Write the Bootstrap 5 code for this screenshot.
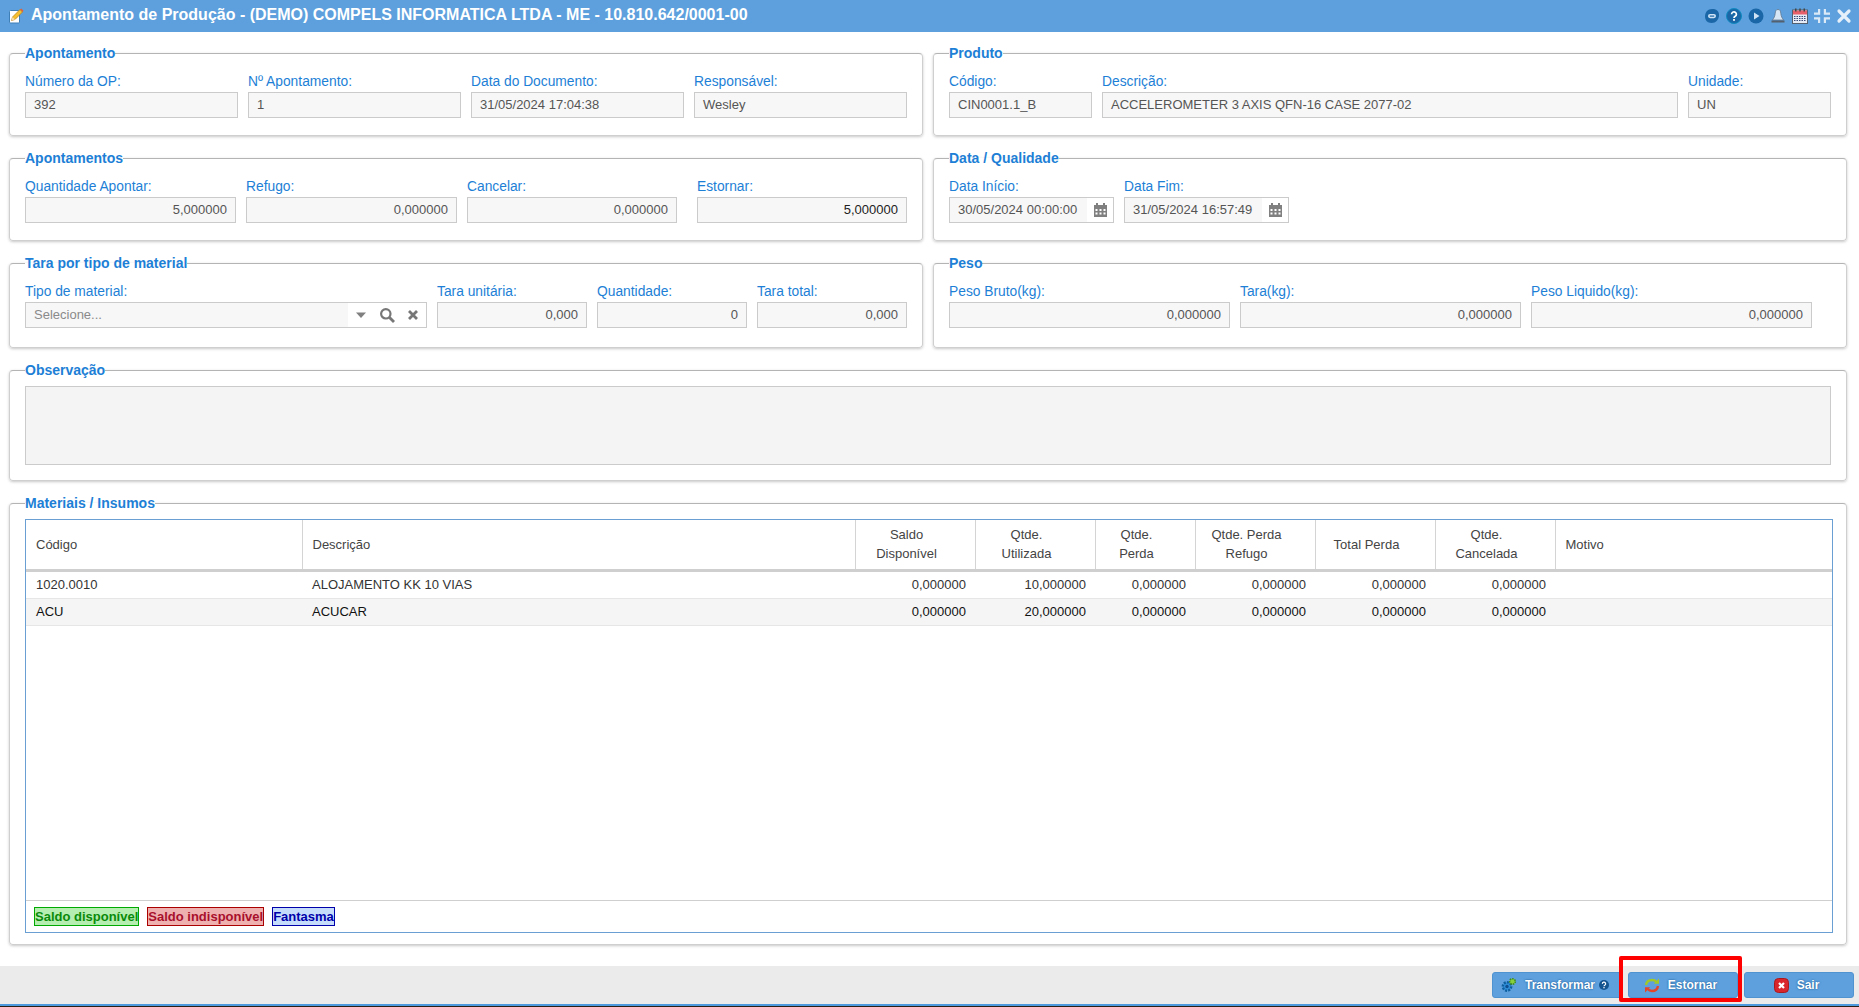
<!DOCTYPE html>
<html lang="pt-BR">
<head>
<meta charset="utf-8">
<title>Apontamento de Produção</title>
<link href="https://cdn.jsdelivr.net/npm/bootstrap@5.3.0/dist/css/bootstrap.min.css" rel="stylesheet">
<style>
html,body{height:100%;overflow:hidden}
body{font-family:"Liberation Sans",Arial,sans-serif;font-size:13px;color:#555;background:#fff}
.page{height:1007px;position:relative}
.titlebar{height:32px;background:#5da0dd;color:#fff;padding:0 7px 0 8px}
.titlebar h1{font-size:16px;line-height:30px;font-weight:700;margin:0 0 2px 7px;color:#fff}
.tbicons{gap:6px}
.tbicons svg{width:16px;height:16px;display:block}
.content{padding:13px 12px 0 9px;gap:14px}
.rowpair{gap:10px}
.rowpair>fieldset{flex:1 1 0;min-width:0}
fieldset.pane{border:1px solid #cfcfcf;border-top-color:#b4b4b4;border-radius:4px;padding:0 15px 17px;box-shadow:0 1px 3px rgba(0,0,0,.22);background:#fff;margin:0;min-width:0}
fieldset.pane.tall{padding-bottom:19px}
fieldset.pane>legend{float:none;width:auto;font-size:14px;line-height:16px;font-weight:700;color:#1d7fd6;margin:0;padding:0}
.fieldsrow{gap:10px;padding-top:13px}
.fld{min-width:0}
.fld label{display:block;font-size:13.8px;line-height:16px;color:#1d7fd6;margin-bottom:2px;white-space:nowrap}
.ctl{height:26px;border:1px solid #cbcbcb;background:#f7f7f7;color:#555;font-size:13px;line-height:24px;padding:0 8px;border-radius:0;white-space:nowrap;overflow:hidden}
.strong-val{color:#222}
.w143{flex:0 0 143px}.w165{flex:0 0 165px}.w211{flex:0 0 211px}.w210{flex:0 0 210px}
.w402{flex:0 0 402px}.w150{flex:0 0 150px}.w281{flex:0 0 281px}
.addon{background:#fff;flex:0 0 26px}
.combo{padding:0;background:#fff}
.combo .txt{flex:1 1 0;background:#f7f7f7;padding:0 8px}
.combo .txt.hint{color:#8a8a8a}
.combo .acts{flex:0 0 78px;gap:12px;padding-left:7px}
.obsbox{height:79px;background:#f4f4f4;border:1px solid #cbcbcb;margin-top:8px;margin-bottom:-2px}
.grid-frame{height:414px;border:1px solid #6a9fd4;margin:8px -2px -6px 0;background:#fff}
.grid-frame .table{table-layout:fixed;margin:0;font-size:13px;--bs-table-bg:transparent;color:#333}
.grid-frame thead th{height:50px;font-weight:400;color:#444;border-bottom:3px solid #cfcfcf;border-right:1px solid #d4d4d4;padding:0 9px 0 10px;vertical-align:middle;line-height:19px}
.grid-frame thead th.text-center{padding-right:27px;padding-left:10px;white-space:nowrap}
.grid-frame thead th:last-child{border-right:0}
.grid-frame tbody td{height:28px;padding:0 9px 0 10px;vertical-align:middle;border-bottom:1px solid #e6e6e6;white-space:nowrap}
.grid-frame tbody tr.r2 td{height:27px;background:#f5f5f5;color:#111}
.gfoot{height:32px;border-top:1px solid #cfcfcf;padding:6px 0 0 8px;gap:8px}
.tagx{height:19px;line-height:17px;font-size:13px;font-weight:700;border:1px solid;padding:0;white-space:nowrap}
.tag-g{background:#b5eeb0;border-color:#0a0;color:#0a8a0a}
.tag-r{background:#efb0b0;border-color:#a00;color:#a8102c}
.tag-b{background:#c5dcfa;border-color:#00a;color:#00a}
.footbar{position:absolute;left:0;right:0;top:966px;height:40px;background:#ebebeb;border-bottom:2px solid #4d9ade;box-shadow:0 1px 0 #2a2016;padding:6px 5px 0 0;gap:6px}
.footbar .btn{height:26px;background:#5da0dd;border:1px solid #4f93d0;border-radius:3px;color:#fff;font-size:12px;font-weight:700;padding:0 5px 0 0;text-shadow:0 0 2px #0b4a85;line-height:24px}
.b130{width:130px}.b110{width:110px}
.redbox{position:absolute;left:1619px;top:956px;width:123px;height:46px;border:4px solid #f00;border-radius:2px;pointer-events:none}
</style>
</head>
<body>
<div class="page d-flex flex-column">
  <header class="titlebar d-flex align-items-center">
    <svg width="16" height="16" viewBox="0 0 16 16"><rect x="1.500" y="2.500" width="10" height="12.500" rx="1" fill="#fff" stroke="#3f7fb8"/><path d="M3.500 12.500 4.500 9l7.500-7.500 2.500 2.500L7 11.500z" fill="#f4c030" stroke="#b87a10" stroke-width=".7"/><path d="M12 1.500l2.500 2.500 1-1.200-2.300-2.300z" fill="#e2603a"/><path d="M3.500 12.500 4.500 9 7 11.500z" fill="#f3dcb0"/></svg>
    <h1 class="flex-grow-1">Apontamento de Produção - (DEMO) COMPELS INFORMATICA LTDA - ME - 10.810.642/0001-00</h1>
    <div class="tbicons d-flex align-items-center">
      <svg viewBox="0 0 16 16"><path d="M8 1c4.200 0 7 1.800 7 6 0 4.500-3.300 8-7.500 8C3.500 15 1 12.200 1 8.500 1 4 3.800 1 8 1z" fill="#1a66a6"/><rect x="4" y="6" width="8" height="4.200" rx="2.100" fill="#cfe3f5"/><rect x="5.800" y="7.500" width="4.400" height="1.200" fill="#1a66a6"/></svg>
      <svg viewBox="0 0 16 16"><circle cx="8" cy="8" r="7.500" fill="#1a66a6" stroke="#0f8ac0"/><path d="M5.600 6.200a2.400 2.400 0 1 1 3.600 2.100c-.8.500-1.200.8-1.200 1.700" fill="none" stroke="#fff" stroke-width="1.700"/><rect x="7.100" y="11" width="1.800" height="1.800" fill="#fff"/></svg>
      <svg viewBox="0 0 16 16"><circle cx="8" cy="8" r="7.500" fill="#1a66a6"/><path d="M6 4.500 11.500 8 6 11.500z" fill="#cfe3f5"/></svg>
      <svg viewBox="0 0 16 16"><path d="M8 1.500c2 0 2.600 1.600 2.800 4 .2 2.600 1.200 4.500 2.700 6.500h-11C4 10 5 8.100 5.200 5.500 5.400 3.100 6 1.500 8 1.500z" fill="#d6e6f4" stroke="#5c6f84" stroke-width=".7"/><rect x="1.500" y="12.500" width="13" height="2" fill="#55606e"/></svg>
      <svg viewBox="0 0 16 16"><rect x="0.500" y="2" width="15" height="13.500" fill="#e6ecf5" stroke="#55606e"/><rect x="1" y="2.500" width="14" height="4" fill="#e8606a"/><rect x="3" y="0.500" width="1.500" height="3" fill="#444"/><rect x="7.250" y="0.500" width="1.500" height="3" fill="#444"/><rect x="11.500" y="0.500" width="1.500" height="3" fill="#444"/><path d="M2 8.500h12M2 10.500h12M2 12.500h12" stroke="#3a4a78" stroke-width="1.200" stroke-dasharray="1.500 1"/></svg>
      <svg viewBox="0 0 16 16"><path d="M0 4.500h4V1h2.200v5.700H0zM16 4.500h-4V1H9.800v5.700H16zM0 11.500h4V15h2.200V9.300H0zM16 11.500h-4V15H9.800V9.300H16z" fill="#dbe9f7"/></svg>
      <svg viewBox="0 0 16 16"><path d="M3 3l10 10M13 3 3 13" stroke="#e6f0fa" stroke-width="3.200" stroke-linecap="round"/></svg>
    </div>
  </header>

  <main class="content d-flex flex-column">
    <div class="rowpair d-flex">
      <fieldset class="pane"><legend>Apontamento</legend>
        <div class="fieldsrow d-flex">
          <div class="fld flex-fill w-25"><label>Número da OP:</label><div class="ctl">392</div></div>
          <div class="fld flex-fill w-25"><label>Nº Apontamento:</label><div class="ctl">1</div></div>
          <div class="fld flex-fill w-25"><label>Data do Documento:</label><div class="ctl">31/05/2024 17:04:38</div></div>
          <div class="fld flex-fill w-25"><label>Responsável:</label><div class="ctl">Wesley</div></div>
        </div>
      </fieldset>
      <fieldset class="pane"><legend>Produto</legend>
        <div class="fieldsrow d-flex">
          <div class="fld w143"><label>Código:</label><div class="ctl">CIN0001.1_B</div></div>
          <div class="fld flex-grow-1"><label>Descrição:</label><div class="ctl">ACCELEROMETER 3 AXIS QFN-16 CASE 2077-02</div></div>
          <div class="fld w143"><label>Unidade:</label><div class="ctl">UN</div></div>
        </div>
      </fieldset>
    </div>

    <div class="rowpair d-flex">
      <fieldset class="pane"><legend>Apontamentos</legend>
        <div class="fieldsrow d-flex">
          <div class="fld w211"><label>Quantidade Apontar:</label><div class="ctl text-end">5,000000</div></div>
          <div class="fld w211"><label>Refugo:</label><div class="ctl text-end">0,000000</div></div>
          <div class="fld w210"><label>Cancelar:</label><div class="ctl text-end">0,000000</div></div>
          <div class="fld w210 ms-auto"><label>Estornar:</label><div class="ctl text-end strong-val">5,000000</div></div>
        </div>
      </fieldset>
      <fieldset class="pane"><legend>Data / Qualidade</legend>
        <div class="fieldsrow d-flex">
          <div class="fld w165"><label>Data Início:</label>
            <div class="ctl combo d-flex"><div class="txt">30/05/2024 00:00:00</div><div class="addon d-flex align-items-center justify-content-center">
              <svg width="15" height="16" viewBox="0 0 15 16"><path d="M1 3h2V1h2v2h5V1h2v2h2v12H1z" fill="#808080"/><path d="M2.500 7h2v2h-2zM6.500 7h2v2h-2zM10.500 7h2v2h-2zM2.500 10.500h2v2h-2zM6.500 10.500h2v2h-2zM10.500 10.500h2v2h-2z" fill="#fff"/></svg></div></div></div>
          <div class="fld w165"><label>Data Fim:</label>
            <div class="ctl combo d-flex"><div class="txt">31/05/2024 16:57:49</div><div class="addon d-flex align-items-center justify-content-center">
              <svg width="15" height="16" viewBox="0 0 15 16"><path d="M1 3h2V1h2v2h5V1h2v2h2v12H1z" fill="#808080"/><path d="M2.500 7h2v2h-2zM6.500 7h2v2h-2zM10.500 7h2v2h-2zM2.500 10.500h2v2h-2zM6.500 10.500h2v2h-2zM10.500 10.500h2v2h-2z" fill="#fff"/></svg></div></div></div>
        </div>
      </fieldset>
    </div>

    <div class="rowpair d-flex">
      <fieldset class="pane tall"><legend>Tara por tipo de material</legend>
        <div class="fieldsrow d-flex">
          <div class="fld w402"><label>Tipo de material:</label>
            <div class="ctl combo d-flex"><div class="txt hint">Selecione...</div>
              <div class="acts d-flex align-items-center">
                <svg width="12" height="8" viewBox="0 0 12 8"><path d="M1 1.500h10L6 7z" fill="#808080"/></svg>
                <svg width="16" height="16" viewBox="0 0 16 16"><circle cx="6.800" cy="6.800" r="4.700" fill="none" stroke="#777" stroke-width="2.200"/><path d="M10.500 10.500 15 15" stroke="#777" stroke-width="2.800"/></svg>
                <svg width="12" height="12" viewBox="0 0 12 12"><path d="M2 2l8 8M10 2l-8 8" stroke="#777" stroke-width="2.800"/></svg>
              </div></div></div>
          <div class="fld w150"><label>Tara unitária:</label><div class="ctl text-end">0,000</div></div>
          <div class="fld w150"><label>Quantidade:</label><div class="ctl text-end">0</div></div>
          <div class="fld w150"><label>Tara total:</label><div class="ctl text-end">0,000</div></div>
        </div>
      </fieldset>
      <fieldset class="pane tall"><legend>Peso</legend>
        <div class="fieldsrow d-flex">
          <div class="fld w281"><label>Peso Bruto(kg):</label><div class="ctl text-end">0,000000</div></div>
          <div class="fld w281"><label>Tara(kg):</label><div class="ctl text-end">0,000000</div></div>
          <div class="fld w281"><label>Peso Liquido(kg):</label><div class="ctl text-end">0,000000</div></div>
        </div>
      </fieldset>
    </div>

    <fieldset class="pane"><legend>Observação</legend>
      <div class="obsbox"></div>
    </fieldset>

    <fieldset class="pane"><legend>Materiais / Insumos</legend>
      <div class="grid-frame d-flex flex-column">
        <div class="flex-grow-1">
          <table class="table">
            <colgroup><col style="width:276px"><col style="width:553px"><col style="width:120px"><col style="width:120px"><col style="width:100px"><col style="width:120px"><col style="width:120px"><col style="width:120px"><col></colgroup>
            <thead><tr>
              <th>Código</th><th>Descrição</th>
              <th class="text-center">Saldo<br>Disponível</th>
              <th class="text-center">Qtde.<br>Utilizada</th>
              <th class="text-center">Qtde.<br>Perda</th>
              <th class="text-center">Qtde. Perda<br>Refugo</th>
              <th class="text-center">Total Perda</th>
              <th class="text-center">Qtde.<br>Cancelada</th>
              <th>Motivo</th>
            </tr></thead>
            <tbody>
              <tr><td>1020.0010</td><td>ALOJAMENTO KK 10 VIAS</td><td class="text-end">0,000000</td><td class="text-end">10,000000</td><td class="text-end">0,000000</td><td class="text-end">0,000000</td><td class="text-end">0,000000</td><td class="text-end">0,000000</td><td></td></tr>
              <tr class="r2"><td>ACU</td><td>ACUCAR</td><td class="text-end">0,000000</td><td class="text-end">20,000000</td><td class="text-end">0,000000</td><td class="text-end">0,000000</td><td class="text-end">0,000000</td><td class="text-end">0,000000</td><td></td></tr>
            </tbody>
          </table>
        </div>
        <div class="gfoot d-flex align-items-start">
          <span class="tagx tag-g">Saldo disponível</span>
          <span class="tagx tag-r">Saldo indisponível</span>
          <span class="tagx tag-b">Fantasma</span>
        </div>
      </div>
    </fieldset>
  </main>

  <footer class="footbar d-flex justify-content-end">
    <button type="button" class="btn b130 d-flex align-items-center justify-content-center">
      <svg class="me-2" width="17" height="16" viewBox="0 0 17 16"><circle cx="7" cy="9.500" r="4.200" fill="#2f8fd8" stroke="#0f5f9f" stroke-width="2.400" stroke-dasharray="2 1.200"/><circle cx="7" cy="9.500" r="1.700" fill="#0f4f8f"/><circle cx="12.500" cy="4.500" r="2.800" fill="#86d040" stroke="#3f8a20" stroke-width="1.600" stroke-dasharray="1.500 1"/></svg>
      Transformar
      <svg class="ms-1" width="10" height="10" viewBox="0 0 16 16"><circle cx="8" cy="8" r="8" fill="#14548f"/><path d="M5.400 6.200a2.600 2.600 0 1 1 3.800 2.200c-.8.500-1.200.8-1.200 1.700" fill="none" stroke="#fff" stroke-width="2"/><rect x="7" y="11.300" width="2" height="2" fill="#fff"/></svg>
    </button>
    <button type="button" class="btn b110 d-flex align-items-center justify-content-center">
      <svg class="me-2" width="16" height="17" viewBox="0 0 16 17" fill="none"><path d="M2 8C2.500 4.500 5 3 8 3c2 0 3.300.7 4.300 1.900" stroke="#a0c828" stroke-width="2.400"/><path d="M15 1.500v5.200H9.800z" fill="#a0c828"/><path d="M14 9c-.5 3.500-3 5-6 5-2 0-3.300-.7-4.300-1.900" stroke="#e4452a" stroke-width="2.400"/><path d="M1 15.500v-5.200h5.200z" fill="#e4452a"/></svg>
      <span>Estornar</span>
    </button>
    <button type="button" class="btn b110 d-flex align-items-center justify-content-center">
      <svg class="me-2" width="15" height="15" viewBox="0 0 15 15"><rect x="0.500" y="0.500" width="14" height="14" rx="4" fill="#d8262c" stroke="#a81a20"/><path d="M5 5l5 5M10 5l-5 5" stroke="#fff" stroke-width="2.200"/></svg>
      <span>Sair</span>
    </button>
  </footer>
  <div class="redbox"></div>
</div>
<script src="https://cdn.jsdelivr.net/npm/bootstrap@5.3.0/dist/js/bootstrap.bundle.min.js"></script>
</body>
</html>
